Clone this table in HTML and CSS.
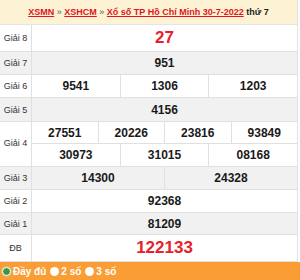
FILE: index.html
```html
<!DOCTYPE html>
<html lang="vi">
<head>
<meta charset="utf-8">
<link rel="stylesheet" href="styles.css">
</head>
<body>
<div class="box">
  <div class="head">
    <a class="lnk">XSMN</a> <span class="sep">»</span> <a class="lnk">XSHCM</a> <span class="sep">»</span> <a class="lnk">Xổ số TP Hồ Chí Minh 30-7-2022</a> <span class="day">thứ 7</span>
  </div>
  <div class="tbl">
    <div class="row r-big">
      <div class="lbl">Giải 8</div>
      <div class="vals"><div class="c red">27</div></div>
    </div>
    <div class="row alt">
      <div class="lbl">Giải 7</div>
      <div class="vals"><div class="c">951</div></div>
    </div>
    <div class="row">
      <div class="lbl">Giải 6</div>
      <div class="vals"><div class="c">9541</div><div class="c">1306</div><div class="c">1203</div></div>
    </div>
    <div class="row alt r5">
      <div class="lbl">Giải 5</div>
      <div class="vals"><div class="c">4156</div></div>
    </div>
    <div class="row r4">
      <div class="lbl">Giải 4</div>
      <div class="sub">
        <div class="vals s1"><div class="c">27551</div><div class="c">20226</div><div class="c">23816</div><div class="c">93849</div></div>
        <div class="vals s2"><div class="c">30973</div><div class="c">31015</div><div class="c">08168</div></div>
      </div>
    </div>
    <div class="row alt">
      <div class="lbl">Giải 3</div>
      <div class="vals"><div class="c">14300</div><div class="c">24328</div></div>
    </div>
    <div class="row">
      <div class="lbl">Giải 2</div>
      <div class="vals"><div class="c">92368</div></div>
    </div>
    <div class="row alt r1">
      <div class="lbl">Giải 1</div>
      <div class="vals"><div class="c">81209</div></div>
    </div>
    <div class="row r-big">
      <div class="lbl">ĐB</div>
      <div class="vals"><div class="c red">122133</div></div>
    </div>
  </div>
  <div class="bar">
    <span class="opt"><span class="radio on"></span>Đầy đủ</span>
    <span class="opt"><span class="radio"></span>2 số</span>
    <span class="opt"><span class="radio"></span>3 số</span>
  </div>
</div>
</body>
</html>
```
FILE: styles.css
```css
* { box-sizing: border-box; }
html, body { margin: 0; padding: 0; background: #fff; }
body { font-family: "Liberation Sans", Arial, sans-serif; width: 300px; height: 280px; overflow: hidden; }
.box { width: 298px; border-right: 1px solid #e2e2e2; }
.head {
  height: 25px;
  background: #fdf3d4;
  border-bottom: 1px solid #e4e4e4;
  text-align: center;
  font-size: 9px;
  font-weight: bold;
  line-height: 25px;
  color: #222;
  white-space: nowrap;
}
.lnk { color: #e2141c; text-decoration: underline; }
.sep { color: #555; font-weight: normal; }
.day { color: #222; }
.tbl { width: 297px; }
.row {
  display: flex;
  height: 23px;
  border-bottom: 1px solid #e0e0e0;
  background: #fff;
}
.row.alt { background: #f1f1f1; }
.row.r-big { height: 27px; }
.row.r5 { height: 24px; }
.row.r1 { height: 22px; }
.row.r4 { height: 45px; }
.lbl {
  width: 32px;
  flex: none;
  border-right: 1px solid #e0e0e0;
  display: flex;
  align-items: center;
  justify-content: center;
  font-size: 9px;
  color: #333;
}
.r4 .lbl { align-items: flex-start; padding-top: 16px; }
.vals { flex: 1; display: flex; }
.c {
  flex: 1;
  display: flex;
  align-items: center;
  justify-content: center;
  font-size: 12px;
  font-weight: bold;
  color: #1a1a1a;
  border-right: 1px solid #e0e0e0;
}
.c:last-child { border-right: none; }
.c.red { color: #e8202a; font-size: 17px; }
.sub { flex: 1; display: flex; flex-direction: column; }
.s1 { height: 22px; flex: none; border-bottom: 1px solid #e0e0e0; }
.s2 { flex: 1; }
.bar {
  height: 18px;
  width: 300px;
  background: #fa9d34;
  display: flex;
  align-items: center;
  padding-left: 2px;
  gap: 4px;
  color: #fff;
  font-size: 10px;
  font-weight: bold;
}
.opt { display: flex; align-items: center; gap: 2px; }
.radio {
  width: 9px; height: 9px; border-radius: 50%;
  background: #fff;
  display: inline-block;
}
.radio.on { background: #3a9a3a; border: 1.5px solid #fff; box-shadow: 0 0 0 0.5px #ccc; }
```
